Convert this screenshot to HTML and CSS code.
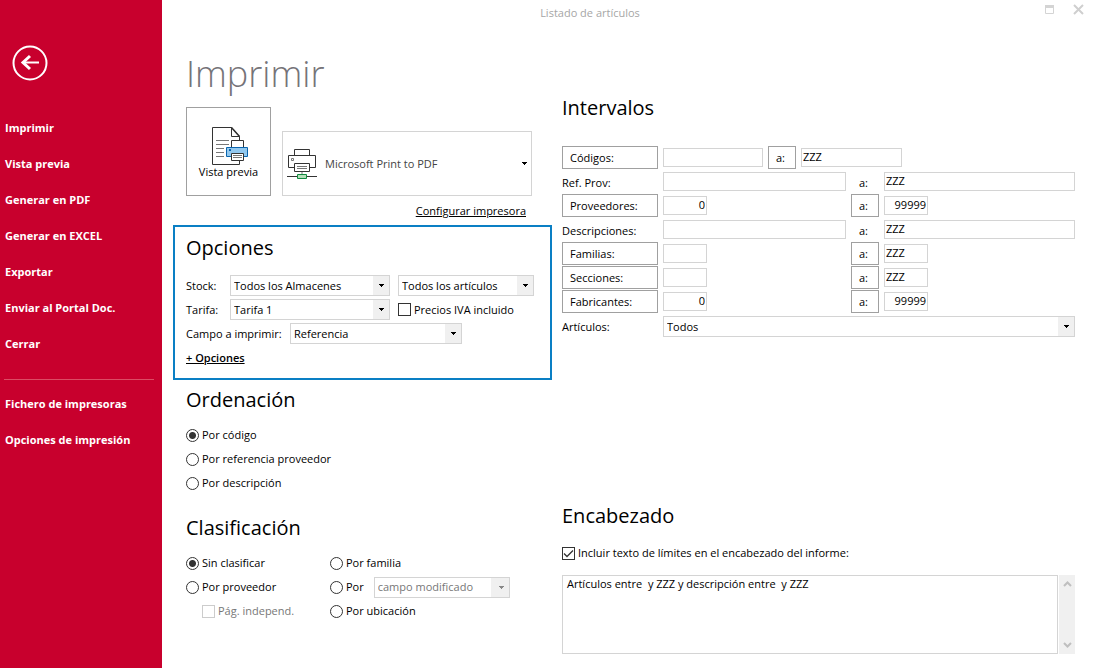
FILE: index.html
```html
<!DOCTYPE html>
<html lang="es">
<head>
<meta charset="utf-8">
<title>Listado de artículos</title>
<link rel="stylesheet" href="styles.css">
</head>
<body>
<nav class="sidebar">
  <button class="back" type="button" aria-label="Volver">
    <svg width="36" height="36" viewBox="0 0 36 36" fill="none" stroke="#fff">
      <circle cx="18" cy="18" r="16.5" stroke-width="2"/>
      <path d="M27 17.500H11" stroke-width="2"/>
      <path d="M18 11l-7 6.500 7 6.500" stroke-width="3"/>
    </svg>
  </button>
  <ul class="menu">
    <li><a href="#">Imprimir</a></li>
    <li><a href="#">Vista previa</a></li>
    <li><a href="#">Generar en PDF</a></li>
    <li><a href="#">Generar en EXCEL</a></li>
    <li><a href="#">Exportar</a></li>
    <li><a href="#">Enviar al Portal Doc.</a></li>
    <li><a href="#">Cerrar</a></li>
  </ul>
  <ul class="menu menu-extra">
    <li><a href="#">Fichero de impresoras</a></li>
    <li><a href="#">Opciones de impresión</a></li>
  </ul>
</nav>
<div class="window">
  <header class="titlebar">
    <span class="title">Listado de artículos</span>
    <div class="controls">
      <button type="button" aria-label="Maximizar"><svg width="11" height="11" viewBox="0 0 11 11"><path d="M1.500 1.500h8v8h-8z" fill="none" stroke="#d4d4d4"/><path d="M1 1h9v3H1z" fill="#d4d4d4"/></svg></button>
      <button type="button" aria-label="Cerrar"><svg width="11" height="11" viewBox="0 0 11 11"><path d="M1 1l9 9M10 1l-9 9" stroke="#cfcfcf" stroke-width="2"/></svg></button>
    </div>
  </header>
  <main class="content">
    <div class="left">
      <h1>Imprimir</h1>
      <div class="printer-row">
        <button class="preview" type="button">
          <svg width="39" height="39" viewBox="-2 0 39 39" fill="none">
            <path d="M28.500 38.500H1.500V1.500H20.500L28.500 10.500V38.500z" fill="#fff" stroke="#333"/>
            <path d="M20.500 1.500V10.500H28.500" stroke="#333"/>
            <path d="M20.500 1.500L28.500 10.500" stroke="#333" stroke-width="1.500"/>
            <path d="M5 14.500h13M5 18.500h13M5 22.500h8M5 26.500h8M5 30.500h8" stroke="#777"/>
            <path d="M20.500 14.500h12v8h-12z" fill="#fff" stroke="#333"/>
            <path d="M15.500 21.500h21v9h-21z" fill="#91c8ef" stroke="#0a64ad"/>
            <path d="M18 23h2v2h-2z" fill="#0a64ad"/>
            <path d="M20.500 27.500h12v7h-12z" fill="#fff" stroke="#333"/>
            <path d="M22 29.500h9M22 31.500h9" stroke="#777"/>
          </svg>
          <span>Vista previa</span>
        </button>
        <div class="printer">
          <svg width="31" height="32" viewBox="0 0 31 32" fill="none">
            <path d="M7.500 1.500h15v7h-15z" fill="#fff" stroke="#333"/>
            <path d="M1.500 7.500h27v12h-27z" fill="#fff" stroke="#333"/>
            <path d="M4.500 10.500h2v2h-2z" stroke="#777"/>
            <path d="M7.500 15.500h15v8h-15z" fill="#fff" stroke="#333"/>
            <path d="M10 18.500h10M10 20.500h10" stroke="#777"/>
            <path d="M15 24v3" stroke="#bbb" stroke-width="2"/>
            <path d="M0 28.500h30" stroke="#333"/>
            <path d="M10.500 26.500h9v4h-9z" fill="#b4dfb9" stroke="#10893e"/>
          </svg>
          <select aria-label="Impresora"><option>Microsoft Print to PDF</option></select>
        </div>
      </div>
      <a class="configure" href="#">Configurar impresora</a>

      <section class="options">
        <h2>Opciones</h2>
        <div class="option-row">
          <label class="short" for="stock">Stock:</label>
          <select class="wide" id="stock"><option>Todos los Almacenes</option></select>
          <select class="medium" aria-label="Artículos en stock"><option>Todos los artículos</option></select>
        </div>
        <div class="option-row">
          <label class="short" for="tarifa">Tarifa:</label>
          <select class="wide" id="tarifa"><option>Tarifa 1</option></select>
          <label class="choice"><input type="checkbox">Precios IVA incluido</label>
        </div>
        <div class="option-row">
          <label class="long" for="campo">Campo a imprimir:</label>
          <select class="field-select" id="campo"><option>Referencia</option></select>
        </div>
        <a class="more" href="#">+ Opciones</a>
      </section>

      <section class="group">
        <h2>Ordenación</h2>
        <label class="choice"><input type="radio" name="orden" checked>Por código</label>
        <label class="choice"><input type="radio" name="orden">Por referencia proveedor</label>
        <label class="choice"><input type="radio" name="orden">Por descripción</label>
      </section>

      <section class="group classify">
        <h2>Clasificación</h2>
        <div class="classify-grid">
          <label class="choice"><input type="radio" name="clase" checked>Sin clasificar</label>
          <label class="choice"><input type="radio" name="clase">Por familia</label>
          <label class="choice"><input type="radio" name="clase">Por proveedor</label>
          <div class="by-field">
            <label class="choice"><input type="radio" name="clase">Por</label>
            <select disabled aria-label="Campo"><option>campo modificado</option></select>
          </div>
          <label class="choice indented"><input type="checkbox" disabled>Pág. independ.</label>
          <label class="choice"><input type="radio" name="clase">Por ubicación</label>
        </div>
      </section>
    </div>

    <div class="right">
      <section>
        <h2>Intervalos</h2>
        <div class="ranges">
          <div class="range compact">
            <button type="button">Códigos:</button>
            <input type="text" aria-label="Código desde">
            <button type="button">a:</button>
            <input type="text" aria-label="Código hasta" value="ZZZ">
          </div>
          <div class="range">
            <label for="ref1">Ref. Prov:</label>
            <input type="text" id="ref1">
            <label class="to" for="ref2">a:</label>
            <input type="text" id="ref2" value="ZZZ">
          </div>
          <div class="range">
            <button type="button">Proveedores:</button>
            <input class="small number" type="text" aria-label="Proveedor desde" value="0">
            <button type="button">a:</button>
            <input class="small number" type="text" aria-label="Proveedor hasta" value="99999">
          </div>
          <div class="range">
            <label for="des1">Descripciones:</label>
            <input type="text" id="des1">
            <label class="to" for="des2">a:</label>
            <input type="text" id="des2" value="ZZZ">
          </div>
          <div class="range">
            <button type="button">Familias:</button>
            <input class="small" type="text" aria-label="Familia desde">
            <button type="button">a:</button>
            <input class="small" type="text" aria-label="Familia hasta" value="ZZZ">
          </div>
          <div class="range">
            <button type="button">Secciones:</button>
            <input class="small" type="text" aria-label="Sección desde">
            <button type="button">a:</button>
            <input class="small" type="text" aria-label="Sección hasta" value="ZZZ">
          </div>
          <div class="range">
            <button type="button">Fabricantes:</button>
            <input class="small number" type="text" aria-label="Fabricante desde" value="0">
            <button type="button">a:</button>
            <input class="small number" type="text" aria-label="Fabricante hasta" value="99999">
          </div>
          <div class="range">
            <label for="articulos">Artículos:</label>
            <select class="span" id="articulos"><option>Todos</option></select>
          </div>
        </div>
      </section>

      <section class="heading-text">
        <h2>Encabezado</h2>
        <label class="choice"><input type="checkbox" checked>Incluir texto de límites en el encabezado del informe:</label>
        <div class="memo">
          <textarea aria-label="Texto del encabezado">Artículos entre  y ZZZ y descripción entre  y ZZZ</textarea>
          <div class="scroll">
            <svg width="9" height="8" viewBox="0 0 9 8"><path d="M1 6l3.500-3.500L8 6" fill="none" stroke="#bfbfbf" stroke-width="2"/></svg>
            <svg width="9" height="8" viewBox="0 0 9 8"><path d="M1 2l3.500 3.500L8 2" fill="none" stroke="#bfbfbf" stroke-width="2"/></svg>
          </div>
        </div>
      </section>
    </div>
  </main>
</div>
</body>
</html>
```

FILE: styles.css
```css
* { box-sizing: border-box; }

body {
  margin: 0;
  display: flex;
  min-height: 100vh;
  background: #fff;
  color: #000;
  font: 11px/16px "Open Sans", "Noto Sans", sans-serif;
}

button, input, select, textarea {
  margin: 0;
  font: inherit;
  color: inherit;
  border-radius: 0;
}

a { color: inherit; }

h1, h2 { margin: 0; font-weight: 400; }
h1 { font-size: 36px; font-weight: 300; line-height: 56px; color: #757378; }
h2 { font-size: 20px; line-height: 28px; }

/* Sidebar */
.sidebar {
  flex: 0 0 162px;
  padding: 45px 8px 0 4px;
  background: #c8002d;
  color: #fff;
}
.back {
  display: block;
  margin: 0 0 29px 8px;
  padding: 0;
  border: 0;
  background: none;
}
.back svg { display: block; }
.menu {
  margin: 0;
  padding: 0 0 17px;
  list-style: none;
  font-size: 11px;
  font-weight: 700;
}
.menu a {
  display: block;
  padding-left: 1px;
  line-height: 36px;
  text-decoration: none;
  white-space: nowrap;
}
.menu-extra { padding-top: 6px; border-top: 1px solid #dc4c64; }

/* Window */
.window { flex: 1; display: flex; flex-direction: column; }
.titlebar { display: flex; height: 26px; }
.title {
  flex: 1;
  text-align: center;
  line-height: 26px;
  color: #a6a6a6;
}
.controls {
  flex: 0 0 75px;
  display: flex;
  justify-content: flex-end;
  align-items: flex-start;
  gap: 18px;
  padding: 4px 9px 0 0;
}
.controls button { padding: 0; border: 0; background: none; }
.controls svg { display: block; }

.content { flex: 1; display: flex; gap: 10px; padding: 20px 18px 14px 11px; }
.left { flex: 0 0 379px; display: flex; flex-direction: column; }
.left h1, .printer-row, .group { margin-left: 13px; }
.right {
  flex: 1;
  min-width: 0;
  padding-top: 48px;
  display: flex;
  flex-direction: column;
}

/* Form controls */
select {
  appearance: none;
  height: 21px;
  padding: 0 18px 0 3px;
  border: 1px solid #d4d4d4;
  background:
    url("data:image/svg+xml,%3Csvg xmlns='http://www.w3.org/2000/svg' width='5' height='3'%3E%3Cpath d='M0 0h5v1H4v1H3v1H2V2H1V1H0z'/%3E%3C/svg%3E") right 5px center no-repeat,
    linear-gradient(#f0f0f0, #f0f0f0) right / 16px 100% no-repeat #fff;
}
select:disabled {
  color: #777;
  opacity: 1;
  background:
    url("data:image/svg+xml,%3Csvg xmlns='http://www.w3.org/2000/svg' width='5' height='3'%3E%3Cpath fill='%23888' d='M0 0h5v1H4v1H3v1H2V2H1V1H0z'/%3E%3C/svg%3E") right 5px center no-repeat,
    linear-gradient(#f0f0f0, #f0f0f0) right / 18px 100% no-repeat #fff;
}

input[type="text"] {
  min-width: 0;
  width: 100%;
  height: 19px;
  padding: 0 1px 2px;
  border: 1px solid #d4d4d4;
  background: #fff;
}

input[type="radio"], input[type="checkbox"] {
  appearance: none;
  flex: none;
  width: 13px;
  height: 13px;
  border: 1px solid #333;
  background: #fff;
}
input[type="radio"] { border-radius: 50%; }
input[type="radio"]:checked {
  background: radial-gradient(circle, #333 3px, #fff 4px);
}
input[type="checkbox"]:checked {
  background: url("data:image/svg+xml,%3Csvg xmlns='http://www.w3.org/2000/svg' width='11' height='11'%3E%3Cpath d='M1 5.500l3 3 6-6' fill='none' stroke='%23333' stroke-width='1.300'/%3E%3C/svg%3E") center no-repeat #fff;
}
input[type="checkbox"]:disabled { border-color: #ccc; }

.choice {
  display: flex;
  align-items: center;
  gap: 3px;
  line-height: 24px;
  white-space: nowrap;
}

/* Printer */
.printer-row { display: flex; align-items: flex-end; gap: 11px; margin-top: 5px; }
.preview {
  display: flex;
  flex-direction: column;
  align-items: center;
  width: 85px;
  height: 89px;
  padding: 18px 0 0;
  border: 1px solid #a0a0a0;
  background: #fff;
  line-height: 14px;
}
.printer {
  display: flex;
  align-items: center;
  width: 250px;
  height: 65px;
  padding-left: 4px;
  border: 1px solid #d4d4d4;
}
.printer select {
  flex: 1;
  height: 63px;
  padding: 0 18px 0 7px;
  border: 0;
  color: #444;
  background-position: right 4px center, right;
  background-size: auto, 0 0;
}
.configure { align-self: flex-end; margin: 7px 26px 6px 0; }

/* Options */
.options { padding: 7px 11px 12px; border: 2px solid #0a7fc4; }
.options h2 { margin-bottom: 13px; }
.option-row { display: flex; align-items: center; height: 21px; margin-bottom: 3px; }
.short { width: 44px; }
.long { width: 104px; white-space: nowrap; }
.wide { width: 160px; margin-right: 8px; }
.medium { width: 136px; }
.field-select { width: 172px; }
.more { display: inline-block; margin-top: 3px; font-weight: 600; }

/* Sort and classify */
.group { margin-top: 6px; }
.group h2 { margin-bottom: 9px; }
.classify { margin-top: 19px; }
.classify-grid { display: grid; grid-template-columns: 144px 1fr; }
.by-field { display: flex; align-items: center; gap: 10px; height: 24px; }
.by-field select { width: 136px; }
.indented { padding-left: 16px; color: #777; }

/* Ranges */
.ranges { margin-top: 24px; }
.range {
  display: grid;
  grid-template-columns: 96px 183px 28px minmax(0, 1fr);
  column-gap: 5px;
  height: 24px;
}
.compact { grid-template-columns: 96px 100px 28px 101px; }
.range button {
  height: 23px;
  padding: 0 7px;
  border: 1px solid #a0a0a0;
  background: #fff;
  text-align: left;
}
.range label { line-height: 26px; }
.range .to { padding-left: 8px; }
.range input, .range select { margin-top: 2px; }
.range .small { width: 44px; }
.range .number { text-align: right; }
.span { grid-column: 2 / -1; }

/* Header text */
.heading-text { margin-top: auto; }
.heading-text .choice { margin: 11px 0 10px; }
.memo { display: flex; gap: 1px; height: 79px; }
.memo textarea {
  flex: 1;
  min-width: 0;
  padding: 0 4px;
  border: 1px solid #d4d4d4;
  resize: none;
  overflow: hidden;
}
.scroll {
  display: flex;
  flex-direction: column;
  justify-content: space-between;
  align-items: center;
  width: 16px;
  padding: 5px 0;
  background: #f0f0f0;
}
```
